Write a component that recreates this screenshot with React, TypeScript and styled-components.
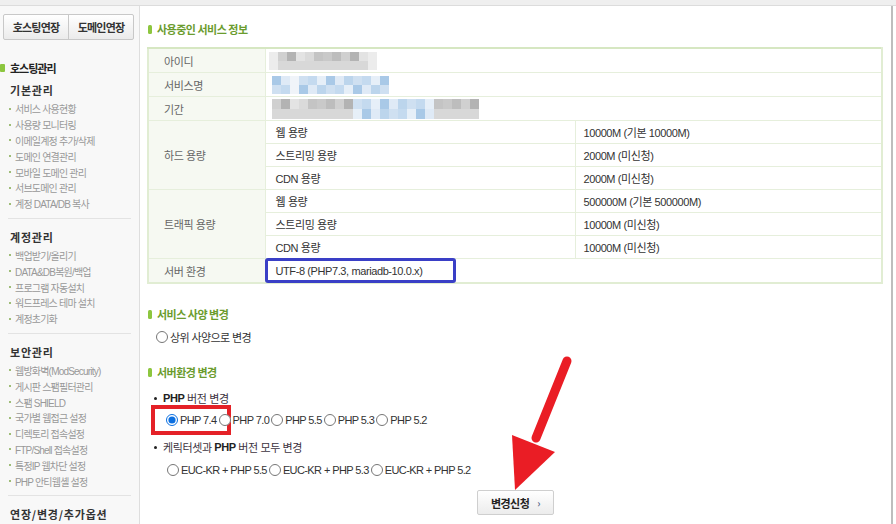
import React from "react";
import styled, { createGlobalStyle } from "styled-components";

const GlobalStyle = createGlobalStyle`
  html, body {
    margin: 0;
    padding: 0;
    background: #fff;
  }
  body {
    font-family: "Liberation Sans", "Noto Sans CJK KR", sans-serif;
    font-size: 11px;
    color: #333;
  }
`;

const Page = styled.div`
  position: relative;
  width: 896px;
  height: 524px;
  overflow: hidden;
  display: flex;
  flex-direction: column;
`;

const TopStrip = styled.div`
  height: 5px;
  flex-shrink: 0;
  background: #efefef;
  border-bottom: 1px solid #dcdcdc;
`;

const Body = styled.div`
  flex: 1;
  display: flex;
  min-height: 0;
`;

/* ---------- sidebar ---------- */

const Sidebar = styled.aside`
  width: 139px;
  flex-shrink: 0;
  background: #f8f8f8;
  border-right: 1px solid #dedede;
  padding-top: 8px;
`;

const ExtendBar = styled.div`
  display: flex;
  width: 131px;
  height: 26px;
  margin-left: 3px;
  box-sizing: border-box;
  border: 1px solid #c8c8c8;
  border-radius: 2px;
  background: linear-gradient(#ffffff, #ebebeb);
`;

const ExtendButton = styled.button`
  flex: 1;
  padding: 0;
  border: 0;
  background: transparent;
  font-family: "Noto Sans CJK KR", sans-serif;
  font-size: 11px;
  font-weight: 700;
  letter-spacing: -0.8px;
  color: #333;
  & + & {
    border-left: 1px solid #c8c8c8;
  }
`;

const MenuTitle = styled.div`
  display: flex;
  align-items: center;
  gap: 5px;
  height: 18px;
  margin-top: 19px;
  font-family: "Noto Sans CJK KR", sans-serif;
  font-size: 11px;
  font-weight: 700;
  letter-spacing: -1px;
  color: #222;
`;

const MenuMarker = styled.span`
  width: 5px;
  height: 8px;
  border-radius: 1px;
  background: #8cc63f;
`;

const GroupTitle = styled.div<{ $first?: boolean }>`
  height: 18px;
  line-height: 18px;
  margin-top: ${(p) => (p.$first ? "4px" : "9px")};
  margin-bottom: 2px;
  padding-left: 10px;
  font-family: "Noto Sans CJK KR", sans-serif;
  font-size: 11px;
  font-weight: 700;
  letter-spacing: 0.8px;
  color: #333;
`;

const MenuList = styled.ul`
  list-style: none;
  margin: 0;
  padding: 0 0 0 9px;
`;

const MenuItem = styled.li`
  display: flex;
  align-items: center;
  height: 15.8px;
  font-size: 10px;
  letter-spacing: -0.8px;
  color: #999;
  white-space: nowrap;
  &::before {
    content: "";
    width: 2px;
    height: 2px;
    margin-right: 4px;
    background: #9fbd78;
  }
`;

const Separator = styled.hr`
  height: 1px;
  margin: 6px 8px 0 8px;
  border: 0;
  background: #e3e3e3;
`;

/* ---------- main ---------- */

const Main = styled.main`
  flex: 1;
  background: #fff;
  border-right: 2px solid #bdbdbd;
  margin-right: 3px;
  padding: 0 7px 0 7px;
`;

const SectionTitle = styled.h3<{ $gap: number }>`
  display: flex;
  align-items: center;
  gap: 5px;
  height: 18px;
  margin: ${(p) => p.$gap}px 0 0 0;
  padding-left: 1px;
  font-family: "Noto Sans CJK KR", sans-serif;
  font-size: 11px;
  font-weight: 700;
  letter-spacing: -0.5px;
  color: #6b9c2e;
`;

const TitleMarker = styled.span`
  width: 4px;
  height: 9px;
  border-radius: 1.5px;
  background: #8dc63f;
`;

const InfoTable = styled.table`
  width: 736px;
  margin-top: 9px;
  border-collapse: collapse;
  border: 2px solid #e1edd3;
  border-top-color: #d6e7c2;
  table-layout: fixed;
  letter-spacing: -0.4px;
`;

const Label = styled.th`
  width: 102px;
  padding: 0 0 0 15px;
  text-align: left;
  font-weight: 400;
  color: #666;
  background: #f6f9f2;
  border: 1px solid #e6efdc;
`;

const Cell = styled.td<{ $h: number; $pad?: number }>`
  position: relative;
  height: ${(p) => p.$h}px;
  padding: 0 0 0 ${(p) => p.$pad ?? 10}px;
  border: 1px solid #e6efdc;
  color: #333;
  white-space: nowrap;
`;

const Highlight = styled.span`
  position: absolute;
  left: -1px;
  top: -1px;
  width: 191px;
  height: 25px;
  box-sizing: border-box;
  border: 3px solid #3a3fc6;
  border-radius: 3px;
`;

const OptionBlock = styled.div<{ $gap: number; $indent: number }>`
  display: flex;
  align-items: center;
  height: 20px;
  margin-top: ${(p) => p.$gap}px;
  padding-left: ${(p) => p.$indent}px;
  letter-spacing: -0.6px;
  color: #333;
  white-space: nowrap;
`;

const BulletLine = styled.div<{ $gap: number }>`
  display: flex;
  align-items: center;
  height: 18px;
  margin-top: ${(p) => p.$gap}px;
  padding-left: 7px;
  letter-spacing: -0.4px;
  color: #3d3340;
  &::before {
    content: "";
    width: 3px;
    height: 3px;
    margin-right: 6px;
    border-radius: 50%;
    background: #222;
  }
  b {
    color: #222;
  }
`;

const RadioLabel = styled.label`
  position: relative;
  display: inline-flex;
  align-items: center;
`;

const Radio = styled.input`
  width: 12px;
  height: 12px;
  margin: 0 2px 0 2px;
  accent-color: #0b6fe0;
`;

const RedBox = styled.span`
  position: absolute;
  left: -13px;
  top: 50%;
  margin-top: -15px;
  width: 80px;
  height: 30px;
  box-sizing: border-box;
  border: 4px solid #e42127;
`;

const ButtonRow = styled.div`
  display: flex;
  justify-content: center;
  margin-top: 10px;
`;

const SubmitButton = styled.button`
  display: flex;
  align-items: center;
  justify-content: center;
  gap: 8px;
  width: 77px;
  height: 25px;
  padding: 0;
  border: 1px solid #cfcfcf;
  border-radius: 2px;
  background: linear-gradient(#ffffff, #ececec);
  font-family: "Noto Sans CJK KR", sans-serif;
  font-size: 11px;
  font-weight: 700;
  letter-spacing: -0.5px;
  color: #222;
  span {
    font-size: 10px;
    color: #5b6c8e;
  }
`;

const ArrowLayer = styled.svg`
  position: absolute;
  left: 0;
  top: 0;
  pointer-events: none;
`;

/* ---------- blurred values ---------- */

const grays = ["#c4c4c4", "#d0d0d0", "#dadada", "#bdbdbd", "#e3e3e3", "#c9c9c9", "#b3b3b3"];
const lightGrays = ["#e6e6e6", "#dedede", "#ececec", "#d8d8d8", "#f0f0f0"];
const blues = ["#cfe0f1", "#bcd5ec", "#dfeaf6", "#a9c9e7", "#e6eff8", "#c4daef"];

function Mosaic({
  cols,
  rows,
  w,
  h,
  color,
}: {
  cols: number;
  rows: number;
  w: number;
  h: number;
  color: (c: number, r: number) => string;
}) {
  const cells = [];
  for (let r = 0; r < rows; r++) {
    for (let c = 0; c < cols; c++) {
      cells.push(<rect key={`${r}-${c}`} x={c * w} y={r * h} width={w} height={h} fill={color(c, r)} />);
    }
  }
  return (
    <svg width={cols * w} height={rows * h} style={{ display: "block", filter: "blur(0.4px)" }}>
      {cells}
    </svg>
  );
}

const pick = (list: string[], i: number) => list[(i * 5 + 3) % list.length];

const idColor = (c: number, r: number) => {
  if (c === 0 || c === 11) return "#ececec";
  return r === 0 ? pick(grays, c) : pick(lightGrays, c + 2);
};
const nameColor = (c: number, r: number) => {
  if (c === 2) return "#f0f4f9";
  return pick(blues, c + r * 3);
};
const periodColor = (c: number, r: number) => {
  if (c >= 9 && c <= 17) return r === 0 ? pick(blues, c) : pick(blues, c + 2);
  return r === 0 ? pick(grays, c + 1) : pick(lightGrays, c);
};

const sidebarGroups = [
  {
    title: "기본관리",
    items: [
      "서비스 사용현황",
      "사용량 모니터링",
      "이메일계정 추가/삭제",
      "도메인 연결관리",
      "모바일 도메인 관리",
      "서브도메인 관리",
      "계정 DATA/DB 복사",
    ],
  },
  {
    title: "계정관리",
    items: ["백업받기/올리기", "DATA&DB복원/백업", "프로그램 자동설치", "워드프레스 테마 설치", "계정초기화"],
  },
  {
    title: "보안관리",
    items: [
      "웹방화벽(ModSecurity)",
      "게시판 스팸필터관리",
      "스팸 SHIELD",
      "국가별 웹접근 설정",
      "디렉토리 접속설정",
      "FTP/Shell 접속설정",
      "특정IP 웹차단 설정",
      "PHP 안티웹셸 설정",
    ],
  },
];

const phpVersions = ["PHP 7.4", "PHP 7.0", "PHP 5.5", "PHP 5.3", "PHP 5.2"];
const eucVersions = ["EUC-KR + PHP 5.5", "EUC-KR + PHP 5.3", "EUC-KR + PHP 5.2"];

export default function App() {
  return (
    <Page>
      <GlobalStyle />
      <TopStrip />
      <Body>
        <Sidebar>
          <ExtendBar>
            <ExtendButton>호스팅연장</ExtendButton>
            <ExtendButton>도메인연장</ExtendButton>
          </ExtendBar>
          <MenuTitle>
            <MenuMarker />
            호스팅관리
          </MenuTitle>
          {sidebarGroups.map((group, i) => (
            <React.Fragment key={group.title}>
              <GroupTitle $first={i === 0}>{group.title}</GroupTitle>
              <MenuList>
                {group.items.map((item) => (
                  <MenuItem key={item}>{item}</MenuItem>
                ))}
              </MenuList>
              <Separator />
            </React.Fragment>
          ))}
          <GroupTitle>연장/변경/추가옵션</GroupTitle>
        </Sidebar>

        <Main>
          <SectionTitle $gap={14}>
            <TitleMarker />
            사용중인 서비스 정보
          </SectionTitle>
          <InfoTable>
            <colgroup>
              <col style={{ width: 117 }} />
              <col style={{ width: 310 }} />
              <col />
            </colgroup>
            <tbody>
              <tr>
                <Label>아이디</Label>
                <Cell $h={23} $pad={3} colSpan={2}>
                  <Mosaic cols={12} rows={2} w={9} h={9} color={idColor} />
                </Cell>
              </tr>
              <tr>
                <Label>서비스명</Label>
                <Cell $h={23} $pad={6} colSpan={2}>
                  <Mosaic cols={13} rows={2} w={9} h={9} color={nameColor} />
                </Cell>
              </tr>
              <tr>
                <Label>기간</Label>
                <Cell $h={23} $pad={6} colSpan={2}>
                  <Mosaic cols={23} rows={2} w={9} h={10} color={periodColor} />
                </Cell>
              </tr>
              <tr>
                <Label rowSpan={3}>하드 용량</Label>
                <Cell $h={22}>웹 용량</Cell>
                <Cell $h={22} $pad={8}>10000M (기본 10000M)</Cell>
              </tr>
              <tr>
                <Cell $h={22}>스트리밍 용량</Cell>
                <Cell $h={22} $pad={8}>2000M (미신청)</Cell>
              </tr>
              <tr>
                <Cell $h={22}>CDN 용량</Cell>
                <Cell $h={22} $pad={8}>2000M (미신청)</Cell>
              </tr>
              <tr>
                <Label rowSpan={3}>트래픽 용량</Label>
                <Cell $h={22}>웹 용량</Cell>
                <Cell $h={22} $pad={8}>500000M (기본 500000M)</Cell>
              </tr>
              <tr>
                <Cell $h={22}>스트리밍 용량</Cell>
                <Cell $h={22} $pad={8}>10000M (미신청)</Cell>
              </tr>
              <tr>
                <Cell $h={22}>CDN 용량</Cell>
                <Cell $h={22} $pad={8}>10000M (미신청)</Cell>
              </tr>
              <tr>
                <Label>서버 환경</Label>
                <Cell $h={23} colSpan={2}>
                  UTF-8 (PHP7.3, mariadb-10.0.x)
                  <Highlight />
                </Cell>
              </tr>
            </tbody>
          </InfoTable>

          <SectionTitle $gap={21}>
            <TitleMarker />
            서비스 사양 변경
          </SectionTitle>
          <OptionBlock $gap={4} $indent={7}>
            <RadioLabel>
              <Radio type="radio" name="spec" />
              상위 사양으로 변경
            </RadioLabel>
          </OptionBlock>

          <SectionTitle $gap={16}>
            <TitleMarker />
            서버환경 변경
          </SectionTitle>
          <BulletLine $gap={8}>
            <b>PHP</b>&nbsp;버전 변경
          </BulletLine>
          <OptionBlock $gap={3} $indent={17}>
            {phpVersions.map((v, i) => (
              <RadioLabel key={v}>
                <Radio type="radio" name="php" defaultChecked={i === 0} />
                {v}
                {i === 0 && <RedBox />}
              </RadioLabel>
            ))}
          </OptionBlock>
          <BulletLine $gap={8}>
            케릭터셋과&nbsp;<b>PHP</b>&nbsp;버전 모두 변경
          </BulletLine>
          <OptionBlock $gap={4} $indent={18}>
            {eucVersions.map((v) => (
              <RadioLabel key={v}>
                <Radio type="radio" name="php" />
                {v}
              </RadioLabel>
            ))}
          </OptionBlock>
          <ButtonRow>
            <SubmitButton>
              변경신청 <span>›</span>
            </SubmitButton>
          </ButtonRow>
        </Main>
      </Body>

      <ArrowLayer width={896} height={524}>
        <line x1={567} y1={361} x2={536} y2={438} stroke="#ea1d25" strokeWidth={9} strokeLinecap="round" />
        <polygon points="512,435 555,452 515,490" fill="#ea1d25" />
      </ArrowLayer>
    </Page>
  );
}
